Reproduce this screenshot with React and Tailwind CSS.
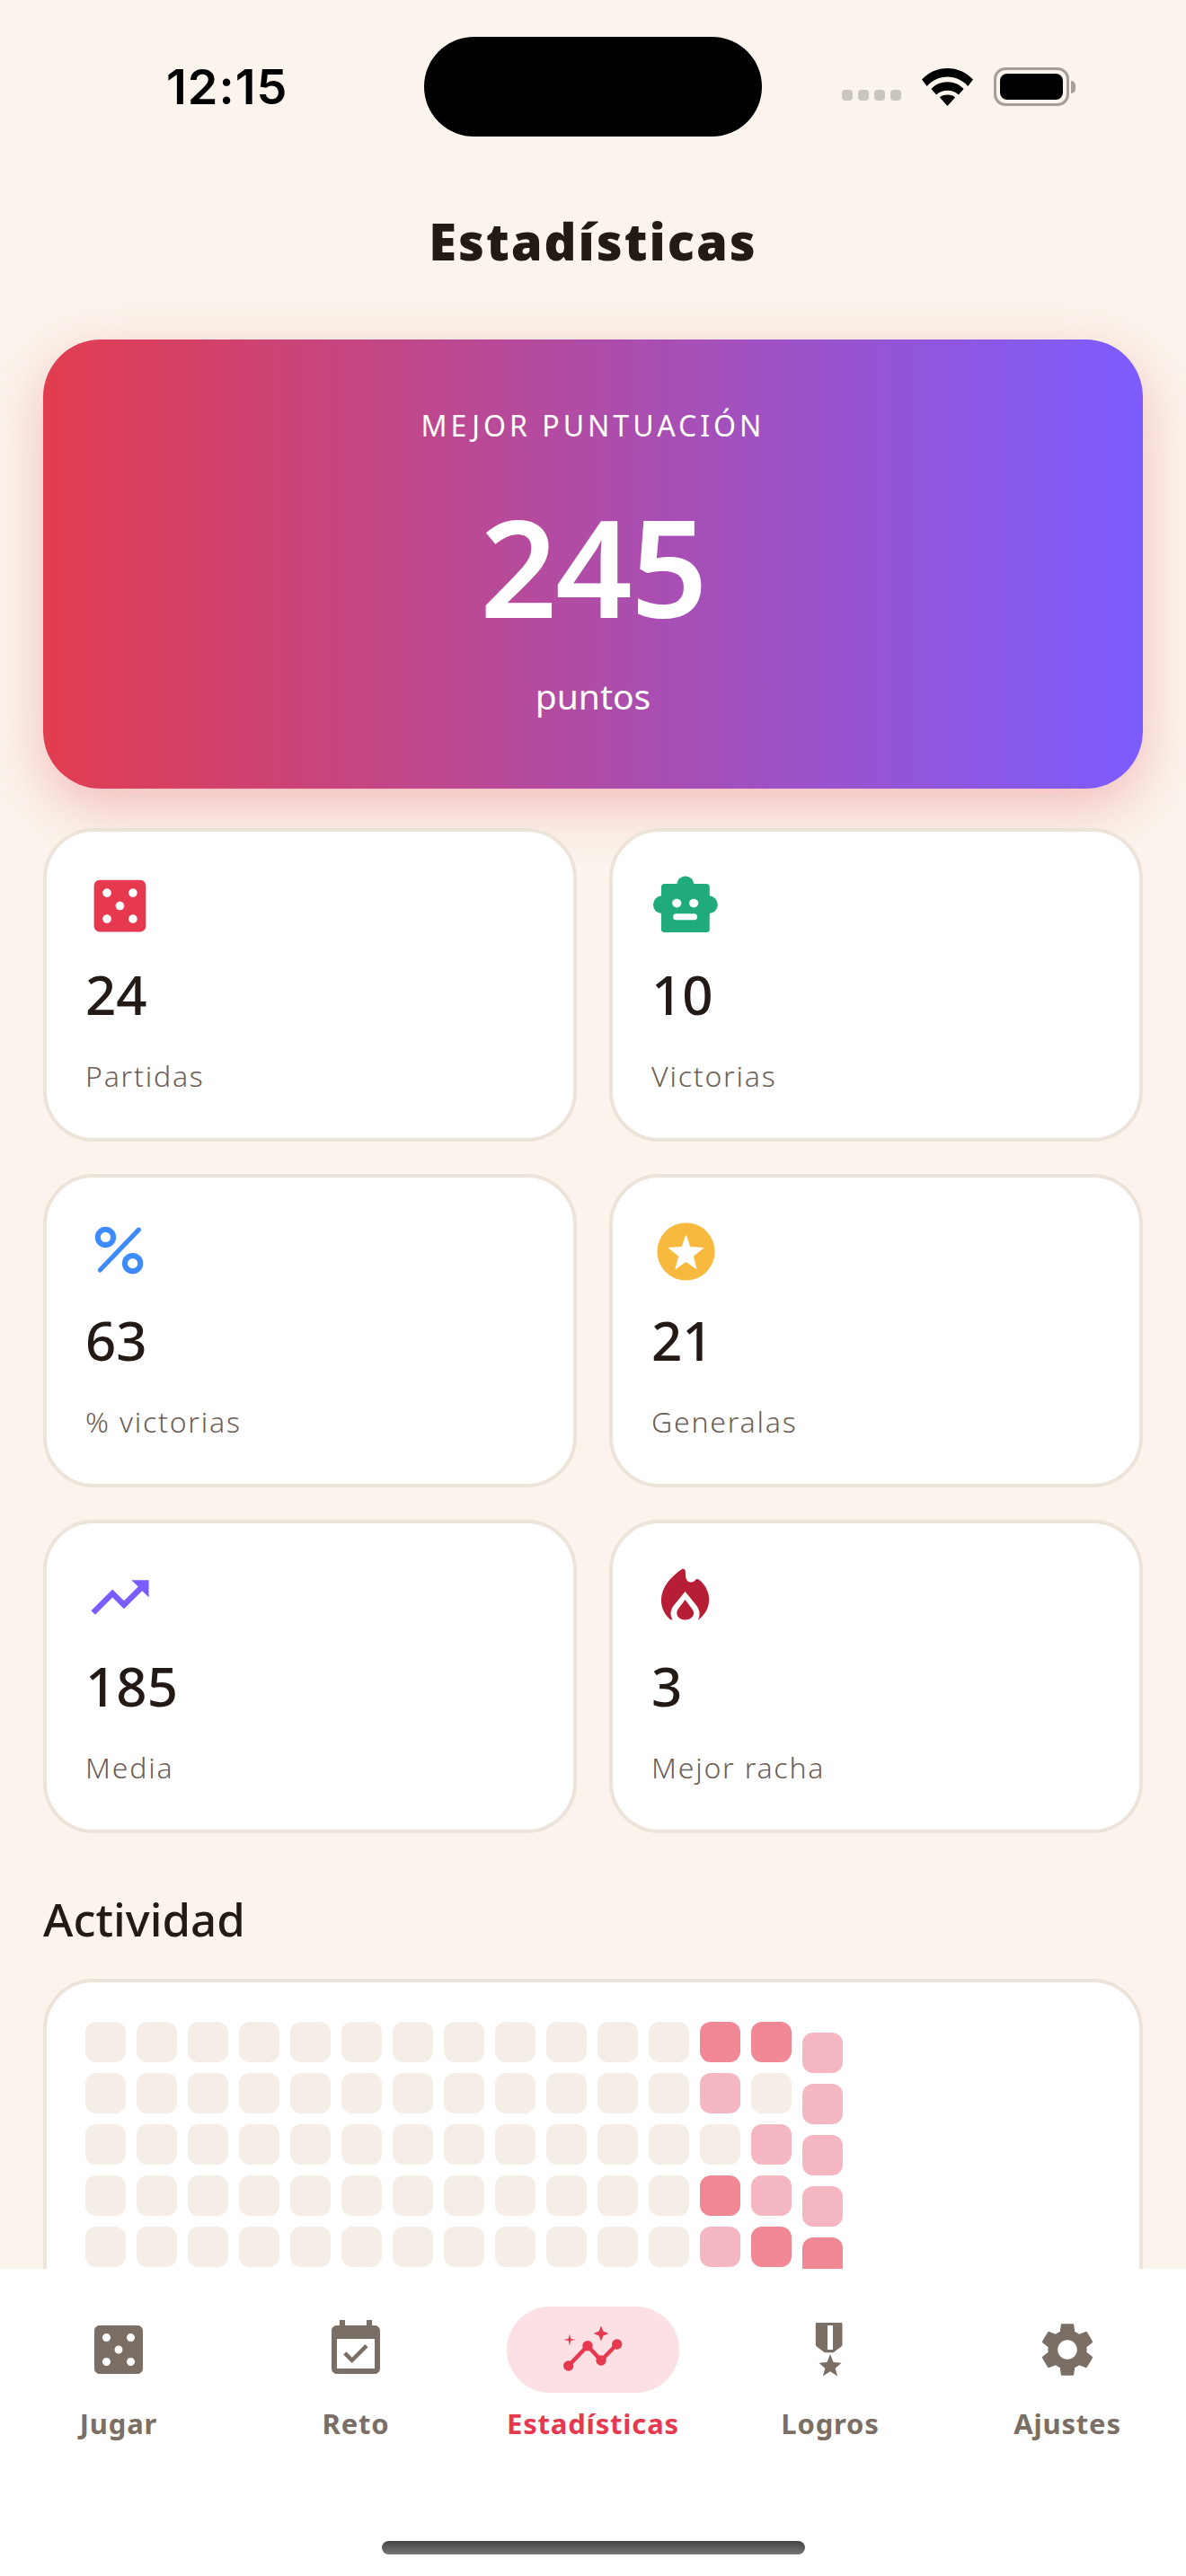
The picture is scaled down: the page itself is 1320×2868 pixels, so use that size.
import React from 'react';

const font = { fontFamily: '"Noto Sans", sans-serif' };

const dicePath = "M19 3H5c-1.1 0-2 .9-2 2v14c0 1.1.9 2 2 2h14c1.1 0 2-.9 2-2V5c0-1.1-.9-2-2-2zM7.5 18c-.83 0-1.5-.67-1.5-1.5S6.67 15 7.5 15s1.5.67 1.5 1.5S8.33 18 7.5 18zm0-9C6.67 9 6 8.33 6 7.5S6.67 6 7.5 6 9 6.67 9 7.5 8.33 9 7.5 9zm4.5 4.5c-.83 0-1.5-.67-1.5-1.5s.67-1.5 1.5-1.5 1.5.67 1.5 1.5-.67 1.5-1.5 1.5zm4.5 4.5c-.83 0-1.5-.67-1.5-1.5s.67-1.5 1.5-1.5 1.5.67 1.5 1.5-.67 1.5-1.5 1.5zm0-9c-.83 0-1.5-.67-1.5-1.5S15.67 6 16.5 6s1.5.67 1.5 1.5S17.33 9 16.5 9z";

const Icon = ({ color, children, className = 'w-[77px] h-[77px]' }) => (
  <svg viewBox="0 0 24 24" className={className} fill={color}>{children}</svg>
);

const navIcon = 'w-[72px] h-[72px]';

const stats = [
  { value: '24', label: 'Partidas', icon: <Icon color="#E63950"><path d={dicePath} /></Icon> },
  {
    value: '10', label: 'Victorias', icon: (
      <Icon color="#1FAB7B">
        <circle cx="11.800" cy="4.700" r="3" />
        <circle cx="3.700" cy="11.600" r="3.100" />
        <circle cx="19.900" cy="11.600" r="3.100" />
        <rect x="3.400" y="4.400" width="16.800" height="16.800" rx="1.200" />
        <ellipse cx="8.800" cy="11.100" rx="1.600" ry="1.500" fill="#fff" />
        <ellipse cx="14.700" cy="11.100" rx="1.600" ry="1.500" fill="#fff" />
        <rect x="7.500" y="14.700" width="8.400" height="2.200" rx="1.100" fill="#fff" />
      </Icon>
    ),
  },
  {
    value: '63', label: '% victorias', icon: (
      <Icon color="none">
        <g stroke="#3D8BFF" strokeLinecap="round">
          <circle cx="7" cy="7" r="2.700" strokeWidth="1.900" />
          <circle cx="16.400" cy="16.100" r="2.700" strokeWidth="1.900" />
          <path d="M18.500 4.400 5.100 18.400" strokeWidth="1.600" />
        </g>
      </Icon>
    ),
  },
  {
    value: '21', label: 'Generalas', icon: (
      <Icon color="#F7B93E">
        <path fillRule="evenodd" d="M12 2a10 10 0 1 0 0 20 10 10 0 0 0 0-20zm0 4 1.500 4.300 4.800.3-3.700 3 1.200 4.600-3.800-2.600-3.800 2.600 1.200-4.600-3.700-3 4.800-.3L12 6z" />
      </Icon>
    ),
  },
  {
    value: '185', label: 'Media', icon: (
      <Icon color="#7C5CFF">
        <path d="M16 6l2.290 2.290-4.880 4.880-4-4L2 16.590 3.410 18l6-6 4 4 6.300-6.290L22 12V6z" />
      </Icon>
    ),
  },
  {
    value: '3', label: 'Mejor racha', icon: (
      <Icon color="#B71E35">
        <path d="M10.600 2.200C6.500 5 3.400 8.700 3.400 13c0 2.600 1.200 5 3.200 6.700h9.800c2.200-1.700 3.600-4.100 3.600-6.900 0-2.800-1.400-5.300-3.600-7-.6-.4-1-.0-1.400.4-.8.700-2 .8-2.700-.2-.5-.8-.5-1.800-.5-3 0-.8-.7-1.100-1.200-.8z" />
        <path fill="#fff" d="M11.700 10 8 14.500c-1 1.200-1.300 2.300-1.300 3.100 0 .8.300 1.600.9 2.600H16c.5-1 .7-1.800.7-2.600 0-.8-.4-1.900-1.300-3.100L11.700 10z" />
        <path d="M11.700 12.800 9.600 15.600c-.6.8-.8 1.300-.8 1.800 0 1.400 1.300 2.400 2.900 2.400s3-1 3-2.400c0-.5-.3-1-.9-1.800l-2.100-2.800z" />
      </Icon>
    ),
  },
];

const navItems = [
  { label: 'Jugar', icon: <Icon className={navIcon} color="#7B6E65"><path d={dicePath} /></Icon> },
  {
    label: 'Reto', icon: (
      <Icon className={navIcon} color="#7B6E65">
        <path d="M16.530 11.060 15.470 10l-4.880 4.880-2.120-2.120-1.060 1.060L10.590 17l5.940-5.940zM19 3h-1V1h-2v2H8V1H6v2H5c-1.110 0-2 .9-2 2v14c0 1.100.89 2 2 2h14c1.100 0 2-.9 2-2V5c0-1.100-.9-2-2-2zm0 16H5V8h14v11z" />
      </Icon>
    ),
  },
  {
    label: 'Estadísticas', active: true, icon: (
      <Icon className={navIcon} color="#E63950">
        <path d="M2.900 18 10 10.600 15 16 20.900 10" fill="none" stroke="#E63950" strokeWidth="1.500" />
        <circle cx="2.900" cy="18" r="1.900" />
        <circle cx="10" cy="10.600" r="1.900" />
        <circle cx="15" cy="16" r="1.900" />
        <circle cx="20.900" cy="10" r="1.900" />
        <path d="M15 3.200 15.800 5.200 17.800 6 15.800 6.800 15 8.800 14.200 6.800 12.200 6 14.200 5.200z" />
        <path d="M3.300 6.100 3.700 7.900 5.500 8.300 3.700 8.700 3.300 10.500 2.900 8.700 1.100 8.300 2.900 7.900z" />
      </Icon>
    ),
  },
  {
    label: 'Logros', icon: (
      <Icon className={navIcon} color="#7B6E65">
        <path fillRule="evenodd" d="M7.500 2h9c.3 0 .5.2.5.5V10c0 .3-.1.6-.4.8l-3.300 2.300h-3.600L6.400 10.800c-.3-.2-.4-.5-.4-.8V2.500c0-.3.2-.5.5-.5z" transform="translate(12 0) scale(.9 1) translate(-12 0)" />
        <rect x="11" y="3" width="2" height="9" fill="#fff" />
        <path d="M12 13.700l1.200 3 3 .2-2.300 2 .8 2.900-2.700-1.700-2.700 1.700.8-2.900-2.300-2 3-.2 1.200-3z" />
      </Icon>
    ),
  },
  {
    label: 'Ajustes', icon: (
      <Icon className={navIcon} color="#7B6E65">
        <path d="M19.140 12.940c.04-.3.060-.61.060-.94 0-.32-.02-.64-.07-.94l2.030-1.580c.18-.14.230-.41.120-.61l-1.920-3.320c-.12-.22-.37-.29-.59-.22l-2.390.96c-.5-.38-1.030-.7-1.620-.94l-.36-2.540c-.04-.24-.24-.41-.48-.41h-3.840c-.24 0-.43.17-.47.41l-.36 2.540c-.59.24-1.130.57-1.620.94l-2.390-.96c-.22-.08-.47 0-.59.22L2.740 8.870c-.12.210-.08.470.12.610l2.030 1.580c-.05.3-.09.630-.09.940s.02.640.07.940l-2.030 1.580c-.18.140-.23.410-.12.610l1.920 3.320c.12.220.37.290.59.220l2.390-.96c.5.380 1.030.7 1.620.94l.36 2.540c.05.240.24.410.48.410h3.840c.24 0 .44-.17.47-.41l.36-2.540c.59-.24 1.130-.56 1.620-.94l2.390.96c.22.080.47 0 .59-.22l1.920-3.320c.12-.22.070-.47-.12-.61l-2.010-1.580zM12 15.600c-1.980 0-3.600-1.620-3.600-3.600s1.620-3.600 3.600-3.600 3.600 1.620 3.600 3.600-1.620 3.600-3.600 3.600z" />
      </Icon>
    ),
  },
];

// 0 empty, 1 light, 2 strong; only the last columns have activity
const tail = [
  [2, 2, 1],
  [1, 0, 1],
  [0, 1, 1],
  [2, 1, 1],
  [1, 2, 2],
];
const cellColors = ['bg-[#F5EEE7]', 'bg-[#F5B8C2]', 'bg-[#F08896]'];

const StatCard = ({ value, label, icon }) => (
  <div className="h-[349px] rounded-[56px] border-4 border-[#EDE4D9] bg-white pl-[43px] pr-11 pt-11">
    <div className="h-[77px]">{icon}</div>
    <div className="mt-[20px] text-[60px] leading-[80px] font-medium text-[#231A15]">{value}</div>
    <div className="mt-[29px] text-[32px] leading-[44px] font-light tracking-[1.8px] text-[#6B5E56]">{label}</div>
  </div>
);

const ActivityGrid = () => (
  <div className="flex gap-3">
    {Array.from({ length: 15 }).map((_, col) => (
      <div key={col} className={`flex flex-col gap-3 ${col === 14 ? 'mt-3' : ''}`}>
        {tail.map((row, r) => (
          <div key={r} className={`w-[45px] h-[45px] rounded-xl ${cellColors[col >= 12 ? row[col - 12] : 0]}`} />
        ))}
      </div>
    ))}
  </div>
);

const StatusBar = () => (
  <div className="flex items-center h-[111px] mt-[41px] shrink-0">
    <div className="w-[472px] pl-[185px] text-[54px] font-semibold text-black leading-none tracking-[1px]" style={{ fontFamily: 'Inter, sans-serif' }}>12:15</div>
    <div className="w-[376px] h-[111px] rounded-[56px] bg-black" />
    <div className="flex items-center pl-[89px] gap-[23px]">
      <div className="flex gap-[6px] mt-[19px]">
        {[0, 1, 2, 3].map((i) => <div key={i} className="w-[12px] h-[12px] rounded-[4px] bg-[#C9C5BF]" />)}
      </div>
      <svg viewBox="0 0 60 44" className="w-[57px] h-[42px]" fill="#000">
        <path d="M30 0C18 0 8 5 0 13l6 8C12 14 21 10 30 10s18 4 24 11l6-8C52 5 42 0 30 0z" />
        <path d="M30 16c-8 0-14 3-19 8l6 7c3-3 8-5 13-5s10 2 13 5l6-7c-5-5-11-8-19-8z" />
        <path d="M30 31c-4 0-7 1-9 3l9 10 9-10c-2-2-5-3-9-3z" />
      </svg>
      <div className="flex items-center gap-[2px]">
        <div className="w-[84px] h-[43px] rounded-[13px] border-[3px] border-[#A39E97] p-[4px]">
          <div className="w-full h-full rounded-[8px] bg-black" />
        </div>
        <div className="w-[5px] h-[14px] rounded-r-full bg-[#A39E97]" />
      </div>
    </div>
  </div>
);

const App = () => {
  return (
    <div className="w-[1320px] h-[2868px] flex flex-col overflow-hidden bg-[#FBF4EC]" style={font}>
      <StatusBar />
      <div className="flex-1 min-h-0 overflow-hidden px-12">
        <h1 className="mt-[76px] text-center text-[56px] leading-[80px] font-black tracking-[2px] text-[#231A15]">Estadísticas</h1>
        <div className="mt-[70px] h-[500px] rounded-[64px] bg-linear-to-r/srgb from-[#E23D50] to-[#7C5CFF] shadow-[0_20px_60px_rgba(230,57,80,0.3)] flex flex-col items-center text-white">
          <div className="mt-[76px] text-[32px] leading-[40px] tracking-[4px] font-normal">MEJOR PUNTUACIÓN</div>
          <div className="mt-[41px] text-[150px] leading-[190px] font-semibold tracking-[-2px]">245</div>
          <div className="mt-[25px] text-[39px] leading-[50px] font-normal">puntos</div>
        </div>
        <div className="mt-11 grid grid-cols-2 gap-9">
          {stats.map((s) => <StatCard key={s.value} {...s} />)}
        </div>
        <h2 className="mt-[63px] text-[51px] leading-[64px] font-medium text-[#231A15]">Actividad</h2>
        <div className="mt-[35px] rounded-[56px] border-4 border-[#EDE4D9] bg-white pl-[43px] pr-11 pt-11 pb-11">
          <ActivityGrid />
        </div>
      </div>
      <div className="h-[342px] shrink-0 bg-white flex flex-col">
        <div className="mt-[42px] grid grid-cols-5">
          {navItems.map((item) => (
            <div key={item.label} className="flex flex-col items-center">
              <div className={`w-[192px] h-[96px] rounded-[48px] flex items-center justify-center ${item.active ? 'bg-[#FBE0E4]' : ''}`}>
                {item.icon}
              </div>
              <div className={`mt-[12px] text-[31px] leading-[44px] font-bold tracking-[0.8px] ${item.active ? 'text-[#E63950]' : 'text-[#7B6E65]'}`}>{item.label}</div>
            </div>
          ))}
        </div>
        <div className="mt-auto mb-[24px] mx-auto w-[471px] h-[15px] rounded-full bg-linear-to-b from-[#444444] to-[#777777]" />
      </div>
    </div>
  );
};

export default App;
